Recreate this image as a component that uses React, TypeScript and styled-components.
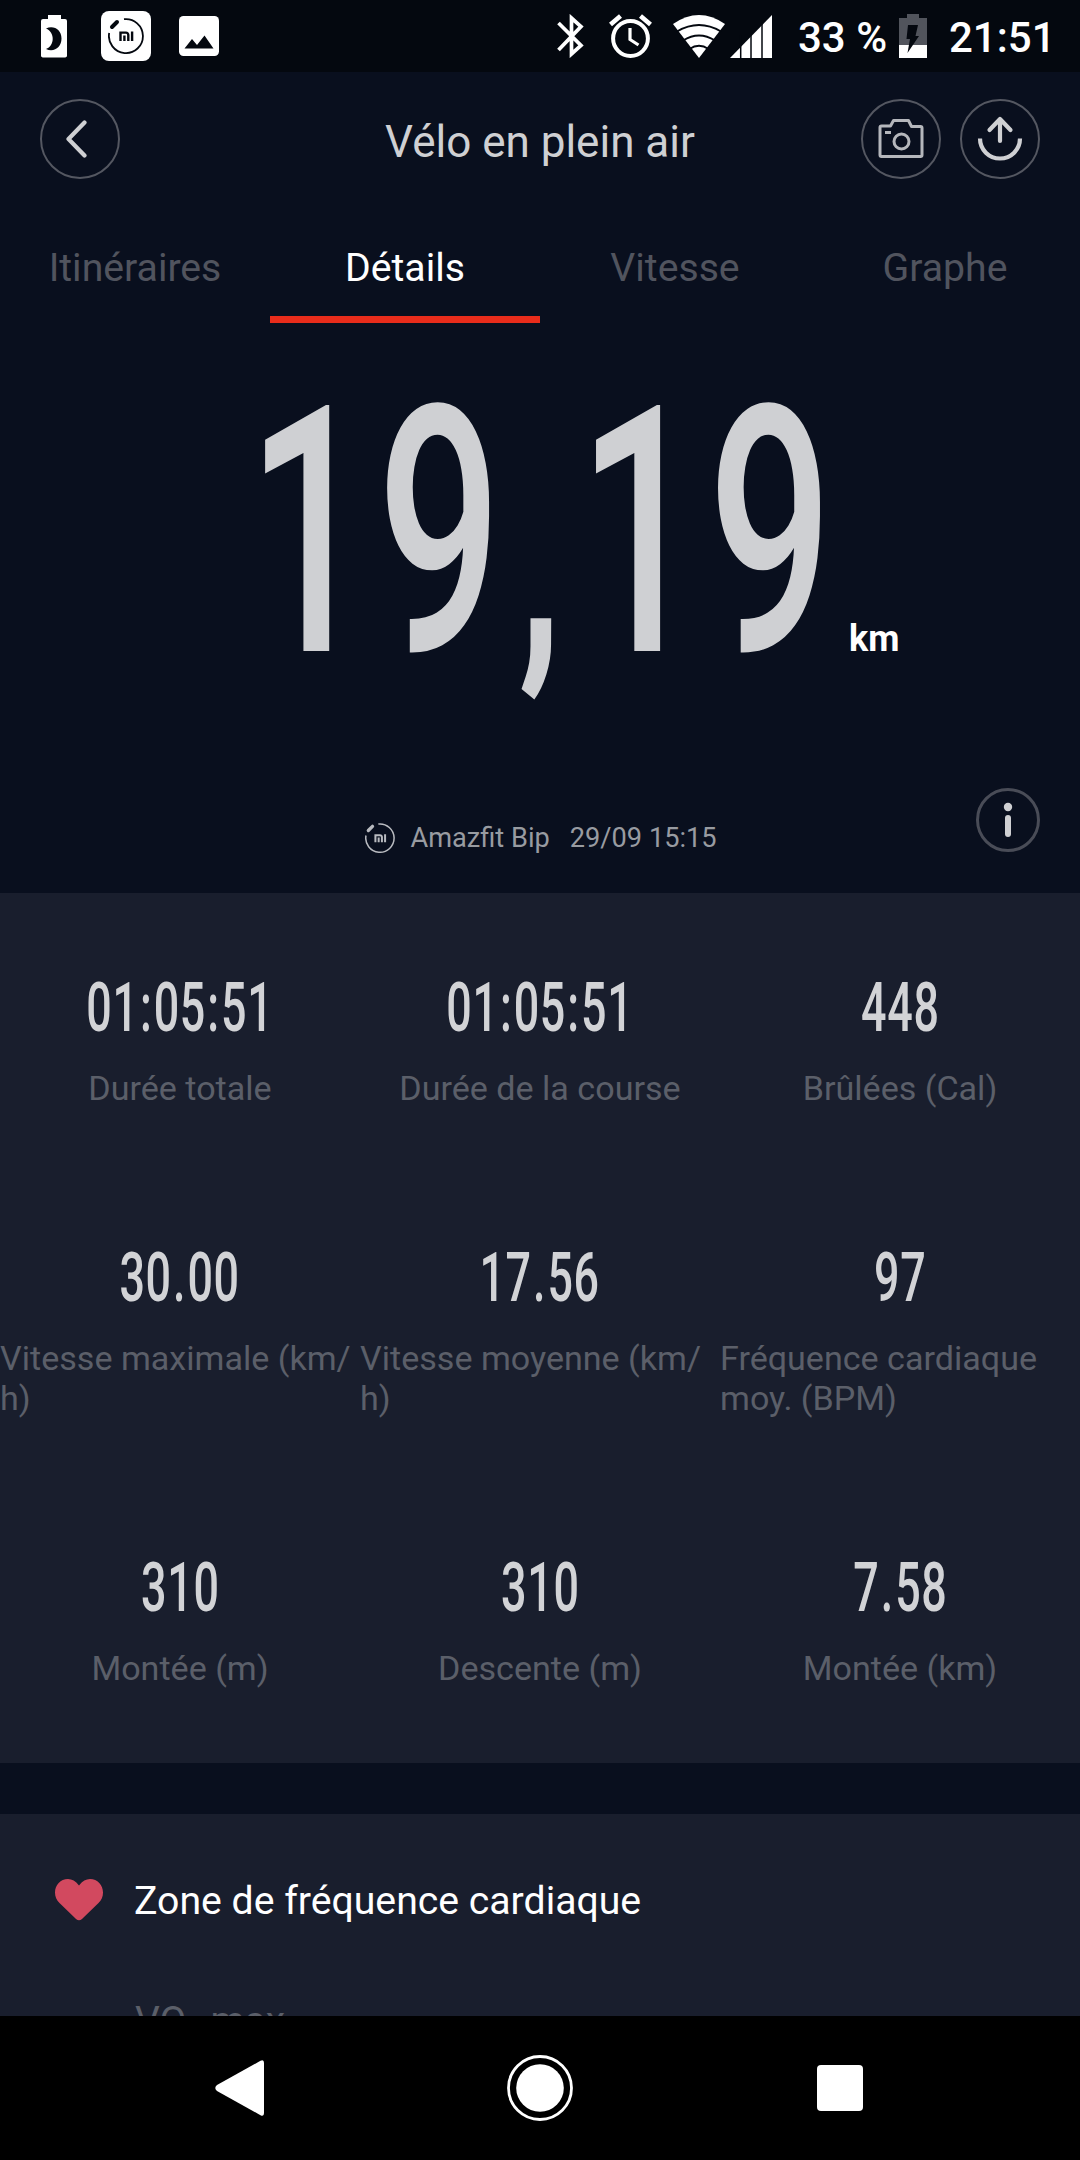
import React from "react";
import styled, { createGlobalStyle } from "styled-components";

const GlobalStyle = createGlobalStyle`
  * { box-sizing: border-box; }
  body {
    margin: 0;
    background: #090f1e;
    font-family: Roboto, "Noto Sans", sans-serif;
    color: #cfd0d3;
  }
  svg { display: block; flex: none; }
`;

const Screen = styled.div`
  width: 1080px;
  height: 2160px;
  display: flex;
  flex-direction: column;
  overflow: hidden;
  background: #090f1e;
`;

const StatusBar = styled.div`
  height: 72px;
  flex: none;
  display: flex;
  justify-content: space-between;
  padding: 0 31px 0 41px;
  background: #04080f;
  color: #fff;
`;

const StatusGroup = styled.div`
  display: flex;
  align-items: center;
`;

const StatusText = styled.span<{ $width: number }>`
  width: ${(p) => p.$width}px;
  font-size: 42px;
  font-weight: 500;
  line-height: 50px;
  padding-top: 3px;
  white-space: nowrap;
`;

const Gap = styled.i<{ $w: number }>`
  width: ${(p) => p.$w}px;
  flex: none;
`;

const Header = styled.header`
  height: 134px;
  flex: none;
  display: grid;
  grid-template-columns: 1fr auto 1fr;
  align-items: center;
  padding: 0 40px;
`;

const Title = styled.h1`
  margin: 0;
  padding-top: 6px;
  font-size: 44px;
  font-weight: 400;
  line-height: 50px;
`;

const Actions = styled.div`
  display: flex;
  justify-content: flex-end;
  gap: 19px;
`;

const RoundButton = styled.button<{ $size?: number }>`
  width: ${(p) => p.$size ?? 80}px;
  height: ${(p) => p.$size ?? 80}px;
  padding: 0;
  display: flex;
  align-items: center;
  justify-content: center;
  border: 2px solid #545761;
  border-radius: 50%;
  background: none;
  color: #cfd0d3;
`;

const BackButton = styled(RoundButton)`
  padding-right: 4px;
`;

const InfoButton = styled(RoundButton)`
  border-width: 3px;
  border-color: #494c57;
`;

const Tabs = styled.nav`
  height: 117px;
  flex: none;
  display: grid;
  grid-template-columns: repeat(4, 1fr);
`;

const Tab = styled.div<{ $active?: boolean }>`
  padding-top: 14px;
  text-align: center;
  font-size: 39.2px;
  line-height: 96px;
  color: ${(p) => (p.$active ? "#fff" : "#51545e")};
  border-bottom: 7px solid ${(p) => (p.$active ? "#e92c1b" : "transparent")};
`;

const Hero = styled.section`
  height: 570px;
  flex: none;
  display: flex;
  flex-direction: column;
  justify-content: space-between;
  padding: 87px 40px 41px;
`;

const Distance = styled.div`
  display: flex;
  align-items: baseline;
  padding-left: 207px;
`;

const DistanceValue = styled.div`
  width: 602px;
  font-size: 345px;
  font-weight: 500;
  line-height: 246px;
  letter-spacing: 9px;
  white-space: nowrap;
  transform: scaleX(0.635);
  transform-origin: left;
`;

const Comma = styled.span`
  padding: 0 17px;
  font-size: 0.8em;
  font-weight: 700;
  line-height: 0;
`;

const Separator = styled.span`
  padding: 0 2px;
`;

const Unit = styled.span`
  font-size: 36px;
  font-weight: 700;
  color: #fff;
`;

const HeroFooter = styled.div`
  height: 64px;
  display: grid;
  grid-template-columns: 64px 1fr 64px;
`;

const Source = styled.div`
  display: flex;
  align-items: center;
  justify-content: center;
  padding: 32px 0 0 2px;
  font-size: 27.2px;
  line-height: 34px;
  color: #989ba1;
`;

const SourceName = styled.span`
  margin: 0 20px 0 15px;
  padding-top: 1px;
`;

const SourceDate = styled.span`
  padding-top: 1px;
`;

const Panel = styled.section`
  flex: none;
  background: #191e2d;
`;

const StatGrid = styled(Panel)`
  height: 870px;
  display: grid;
  grid-template-columns: repeat(3, 360px);
  grid-template-rows: 270px 310px 290px;
`;

const Stat = styled.div`
  display: flex;
  flex-direction: column;
  align-items: center;
  padding-top: 85px;
`;

const StatValue = styled.div`
  font-size: 69px;
  font-weight: 500;
  line-height: 60px;
  letter-spacing: 1px;
  white-space: nowrap;
  color: #d2d3d6;
  transform: scaleX(0.65);
`;

const StatLabel = styled.div`
  margin-top: 30px;
  font-size: 34.1px;
  line-height: 40px;
  color: #5b5f69;
`;

const Zone = styled(Panel)`
  height: 202px;
  margin-top: 51px;
  overflow: hidden;
  padding: 61px 55px 0;
`;

const ZoneTitle = styled.div`
  display: flex;
  align-items: center;
  height: 50px;
  font-size: 39.2px;
  line-height: 48px;
  color: #fff;
`;

const ZoneName = styled.span`
  padding-top: 1px;
`;

const ZoneRow = styled.div`
  margin: 71px 0 0 80px;
  font-size: 39px;
  line-height: 50px;
  color: #5b5f69;
`;

const NavBar = styled.div`
  height: 144px;
  flex: none;
  display: grid;
  grid-template-columns: repeat(3, 300px);
  justify-content: center;
  justify-items: center;
  align-items: center;
  background: #000;
`;

const BatteryMoon = () => (
  <svg width="26" height="43" viewBox="0 0 26 43">
    <path d="M7 0h13v4h4a2 2 0 0 1 2 2v34a2 2 0 0 1-2 2.500H2a2 2 0 0 1-2-2.500V6a2 2 0 0 1 2-2h5z" fill="#fff" />
    <path d="M5 13.500C13 10 20.500 15 20.500 23.500S13 38 5 34C14 31 14 17 5 13.500z" fill="#04080f" />
  </svg>
);

const MiMark = ({ size, color }: { size: number; color: string }) => (
  <svg width={size} height={size} viewBox="0 0 36 36" fill="none" stroke={color}>
    <path d="M16 1.200A17 17 0 1 1 1.200 15" strokeWidth="1.800" />
    <path d="M4 9L9 4" strokeWidth="4" strokeLinecap="round" />
    <path d="M12.500 23V14.600H18a2.300 2.300 0 0 1 2.300 2.300V23M16.400 17.500V23M24.100 13.500V23" strokeWidth="2.400" />
  </svg>
);

const MiTile = styled.span`
  width: 50px;
  height: 50px;
  display: flex;
  align-items: center;
  justify-content: center;
  border-radius: 8px;
  background: #fff;
`;

const PictureIcon = () => (
  <svg width="40" height="40" viewBox="0 0 40 40">
    <rect width="40" height="40" rx="4.500" fill="#fff" />
    <path d="M5.500 32.500L13 23l5 6 7.500-9.500 9 13z" fill="#04080f" />
  </svg>
);

const BluetoothIcon = () => (
  <svg width="28" height="44" viewBox="0 0 28 44" fill="none" stroke="#fff" strokeWidth="3.700">
    <path d="M1.500 9L24 31.500 14.500 40V4L24 12.500 1.500 36" />
  </svg>
);

const AlarmIcon = () => (
  <svg width="43" height="44" viewBox="0 0 43 44" fill="none" stroke="#fff">
    <circle cx="21.500" cy="24.500" r="17.400" strokeWidth="4" />
    <path d="M21 14v11.500l8.500 5.500" strokeWidth="3.200" />
    <path d="M1.500 10.500L11.500 2M41.500 10.500L31.500 2" strokeWidth="4.600" />
  </svg>
);

const WifiIcon = () => (
  <svg width="52" height="43" viewBox="0 0 52 43">
    <path d="M26 43L0 9Q26-9 52 9z" fill="#fff" />
    <path d="M4 16.500Q26 3.500 48 16.500M10 25.500Q26 15.500 42 25.500M16.500 34Q26 27.500 35.500 34" fill="none" stroke="#04080f" strokeWidth="1.800" />
  </svg>
);

const SignalIcon = () => (
  <svg width="42" height="43" viewBox="0 0 42 43">
    <path d="M0 43L42 0v43z" fill="#fff" />
    <path d="M10.700 20v23M21 12v31M32 4v39" stroke="#04080f" strokeWidth="1.500" />
  </svg>
);

const BatteryIcon = () => (
  <svg width="28" height="44" viewBox="0 0 28 44">
    <path d="M8 0h12v4h8v27H0V4h8z" fill="#51545c" />
    <path d="M0 31h28v13H0z" fill="#fff" />
    <path d="M9 11h10l-2.500 11H20L8.500 39l2.500-14H7.500z" fill="#04080f" />
  </svg>
);

const BackIcon = () => (
  <svg width="24" height="40" viewBox="0 0 24 40" fill="none" stroke="currentColor" strokeWidth="4.200" strokeLinecap="round" strokeLinejoin="round">
    <path d="M18.500 3.500L2.500 20l16 16.500" />
  </svg>
);

const CameraIcon = () => (
  <svg width="46" height="40" viewBox="0 0 46 40" fill="none" stroke="#b5b7bc" strokeWidth="3">
    <path d="M2 8.500a1.500 1.500 0 0 1 1.500-1.500H12.500L15.500 1.500H30.500L33.500 7.500H42.500a1.500 1.500 0 0 1 1.500 1.500V36a1.500 1.500 0 0 1-1.500 1.500H3.500A1.500 1.500 0 0 1 2 36z" strokeLinejoin="round" />
    <circle cx="23.500" cy="22.500" r="7.500" />
    <path d="M7 13.500h6" />
  </svg>
);

const ShareIcon = () => (
  <svg width="46" height="46" viewBox="0 0 46 46" fill="none" stroke="currentColor" strokeWidth="4.200" strokeLinecap="round" strokeLinejoin="round">
    <path d="M23 25V3M12.500 14L23 3l10.500 11" />
    <path d="M3 22.500a20 20 0 0 0 40 0" strokeLinecap="butt" />
  </svg>
);

const InfoIcon = () => (
  <svg width="10" height="36" viewBox="0 0 10 36" fill="currentColor">
    <circle cx="5" cy="5" r="4.200" />
    <rect x="2" y="13" width="6" height="22" rx="3" />
  </svg>
);

const HeartIcon = () => (
  <svg width="48" height="42" viewBox="0 0 48 42">
    <path d="M24 6.500C20.500 2 17 0 13 0 5.500 0 0 6 0 13.500 0 18 1.500 21 4.500 24L21 40q3 2.500 6 0L43.500 24C46.500 21 48 18 48 13.500 48 6 42.500 0 35 0c-4 0-7.500 2-11 6.500z" fill="#d2495f" />
  </svg>
);

const NavBack = () => (
  <svg width="50" height="56" viewBox="0 0 50 56">
    <path d="M45.500.800Q49 -1 49 3V53Q49 57 45.500 55.200L2 31Q-1.500 28 2 25z" fill="#fff" />
  </svg>
);

const NavHome = () => (
  <svg width="66" height="66" viewBox="0 0 66 66">
    <circle cx="33" cy="33" r="31.500" fill="none" stroke="#fff" strokeWidth="2.800" />
    <circle cx="33" cy="33" r="23.800" fill="#fff" />
  </svg>
);

const NavRecent = () => (
  <svg width="46" height="46" viewBox="0 0 46 46">
    <rect width="46" height="46" rx="4" fill="#fff" />
  </svg>
);

const stats = [
  { value: "01:05:51", label: "Durée totale" },
  { value: "01:05:51", label: "Durée de la course" },
  { value: "448", label: "Brûlées (Cal)" },
  { value: "30.00", label: "Vitesse maximale (km/\u200bh)" },
  { value: "17.56", label: "Vitesse moyenne (km/\u200bh)" },
  { value: "97", label: "Fréquence cardiaque moy. (BPM)" },
  { value: "310", label: "Montée (m)" },
  { value: "310", label: "Descente (m)" },
  { value: "7.58", label: "Montée (km)" },
];

/* Figures are tightly condensed; punctuation keeps wider side bearings. */
const Figures = ({ value }: { value: string }) => (
  <>
    {value.split(/([:.])/).map((part, i) =>
      i % 2 ? <Separator key={i}>{part}</Separator> : part
    )}
  </>
);

export default function App() {
  return (
    <>
      <GlobalStyle />
      <Screen>
        <StatusBar>
          <StatusGroup>
            <BatteryMoon />
            <Gap $w={34} />
            <MiTile><MiMark size={36} color="#04080f" /></MiTile>
            <Gap $w={28} />
            <PictureIcon />
          </StatusGroup>
          <StatusGroup>
            <BluetoothIcon />
            <Gap $w={24} />
            <AlarmIcon />
            <Gap $w={21} />
            <WifiIcon />
            <Gap $w={5} />
            <SignalIcon />
            <Gap $w={26} />
            <StatusText $width={101}>33 %</StatusText>
            <BatteryIcon />
            <Gap $w={22} />
            <StatusText $width={100}>21:51</StatusText>
          </StatusGroup>
        </StatusBar>

        <Header>
          <BackButton aria-label="Retour"><BackIcon /></BackButton>
          <Title>Vélo en plein air</Title>
          <Actions>
            <RoundButton aria-label="Photo"><CameraIcon /></RoundButton>
            <RoundButton aria-label="Partager"><ShareIcon /></RoundButton>
          </Actions>
        </Header>

        <Tabs>
          <Tab>Itinéraires</Tab>
          <Tab $active>Détails</Tab>
          <Tab>Vitesse</Tab>
          <Tab>Graphe</Tab>
        </Tabs>

        <Hero>
          <Distance>
            <DistanceValue>19<Comma>,</Comma>19</DistanceValue>
            <Unit>km</Unit>
          </Distance>
          <HeroFooter>
            <i />
            <Source>
              <MiMark size={30} color="#b9bbc0" />
              <SourceName>Amazfit Bip</SourceName>
              <SourceDate>29/09 15:15</SourceDate>
            </Source>
            <InfoButton $size={64} aria-label="Informations"><InfoIcon /></InfoButton>
          </HeroFooter>
        </Hero>

        <StatGrid>
          {stats.map((s, i) => (
            <Stat key={i}>
              <StatValue><Figures value={s.value} /></StatValue>
              <StatLabel>{s.label}</StatLabel>
            </Stat>
          ))}
        </StatGrid>

        <Zone>
          <ZoneTitle>
            <HeartIcon />
            <Gap $w={31} />
            <ZoneName>Zone de fréquence cardiaque</ZoneName>
          </ZoneTitle>
          <ZoneRow>VO₂ max</ZoneRow>
        </Zone>

        <NavBar>
          <NavBack />
          <NavHome />
          <NavRecent />
        </NavBar>
      </Screen>
    </>
  );
}
